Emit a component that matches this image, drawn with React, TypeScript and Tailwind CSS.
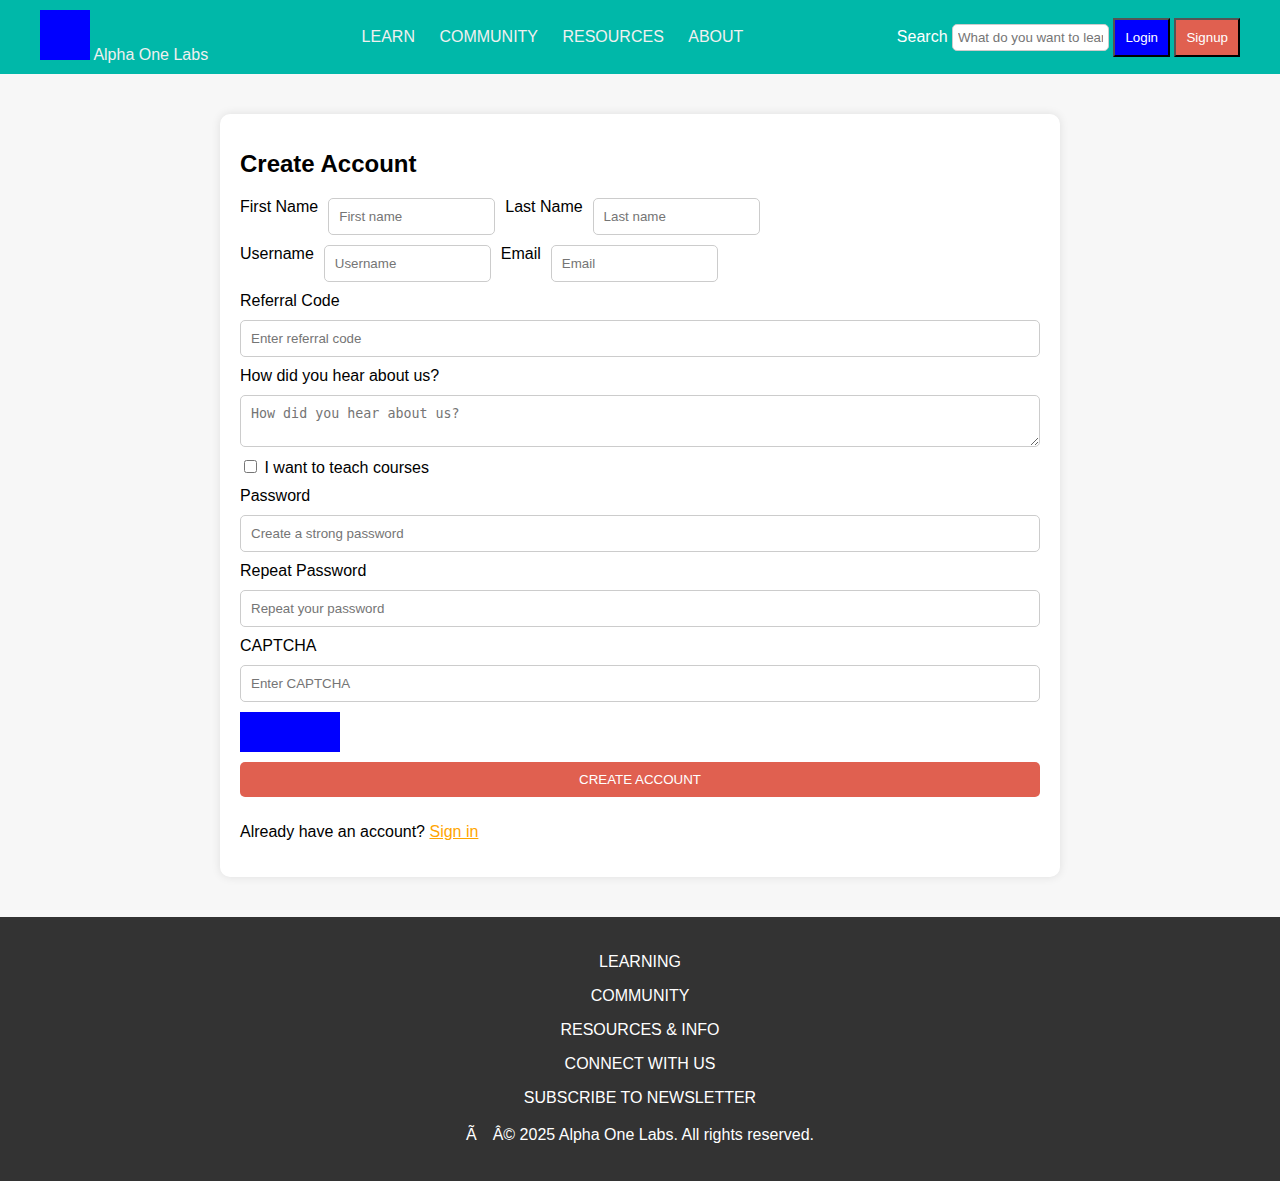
import React from "react";

const field = "border border-[#cccccc] rounded-[5px] p-[10px] text-[13.333px] leading-[15px] placeholder:text-[#757575] bg-white";

function Input({ placeholder, type = "text", className = "" }: { placeholder: string; type?: string; className?: string }) {
  return <input type={type} placeholder={placeholder} className={`${field} ${className}`} />;
}

export default function App() {
  return (
    <div className="bg-[#f7f7f7] text-black text-base leading-[18px] font-['Liberation_Sans',Arial,sans-serif]">
      <header className="bg-[#00b8a9] text-white h-[74px] px-10 py-[10px] flex items-center justify-between">
        <div className="flex items-end gap-[3.4px] h-[54px] text-[#f0f0f0]">
          <div className="size-[50px] bg-[#0000ff] self-start" />
          <span>Alpha One Labs</span>
        </div>
        <nav className="flex gap-[24.45px] text-[#f0f0f0]">
          <a>LEARN</a>
          <a>COMMUNITY</a>
          <a>RESOURCES</a>
          <a>ABOUT</a>
        </nav>
        <div className="flex items-center gap-[4.45px]">
          <label>Search</label>
          <input
            placeholder="What do you want to learn?"
            className="w-[157px] h-[27px] p-[5px] border border-[#cccccc] rounded-[5px] bg-white text-[13.333px] leading-[15px] placeholder:text-[#757575]"
          />
          <button className="h-[39px] p-[10px] border-2 border-black [border-style:outset] bg-[#0000ff] text-[13.333px] leading-[15px]">Login</button>
          <button className="h-[39px] p-[10px] border-2 border-black [border-style:outset] bg-[#e06050] text-[13.333px] leading-[15px]">Signup</button>
        </div>
      </header>

      <main className="py-10">
        <form className="w-[840px] h-[763px] mx-auto p-5 bg-white rounded-[10px] shadow-[0_0_10px_rgba(0,0,0,0.1)] flex flex-col gap-[10px]">
          <h2 className="text-2xl leading-[27px] font-bold mt-4 mb-[11px]">Create Account</h2>
          <div className="flex gap-[10px] h-[37px]">
            <label>First Name</label>
            <Input placeholder="First name" className="w-[167px]" />
            <label>Last Name</label>
            <Input placeholder="Last name" className="w-[167px]" />
          </div>
          <div className="flex gap-[10px] h-[37px]">
            <label>Username</label>
            <Input placeholder="Username" className="w-[167px]" />
            <label>Email</label>
            <Input placeholder="Email" className="w-[167px]" />
          </div>
          <label>Referral Code</label>
          <Input placeholder="Enter referral code" />
          <label>How did you hear about us?</label>
          <textarea
            placeholder="How did you hear about us?"
            className="h-[52px] p-[10px] border border-[#cccccc] rounded-[5px] text-[13.333px] leading-[15px] placeholder:text-[#757575] font-['DejaVu_Sans_Mono',monospace] shrink-0"
          />
          <label className="flex items-start h-5">
            <input type="checkbox" className="size-[13px] ml-1 mr-[7.45px] mt-[3px]" />
            <span className="mt-0.5">I want to teach courses</span>
          </label>
          <label>Password</label>
          <Input type="password" placeholder="Create a strong password" />
          <label>Repeat Password</label>
          <Input type="password" placeholder="Repeat your password" />
          <label>CAPTCHA</label>
          <Input placeholder="Enter CAPTCHA" />
          <div className="w-[100px] h-10 bg-[#0000ff]" />
          <button className="h-[35px] p-[10px] rounded-[5px] bg-[#e06050] text-white text-[13.333px] leading-[15px]">CREATE ACCOUNT</button>
          <p className="mt-4">
            Already have an account? <a className="text-[#ffa500] underline">Sign in</a>
          </p>
        </form>
      </main>

      <footer className="h-[264px] bg-[#333333] text-white text-center pt-9 flex flex-col gap-4">
        <p>LEARNING</p>
        <p>COMMUNITY</p>
        <p>RESOURCES &amp; INFO</p>
        <p>CONNECT WITH US</p>
        <p>SUBSCRIBE TO NEWSLETTER</p>
        <p className="mt-[3px]">Ã&#8195;Â© 2025 Alpha One Labs. All rights reserved.</p>
      </footer>
    </div>
  );
}
